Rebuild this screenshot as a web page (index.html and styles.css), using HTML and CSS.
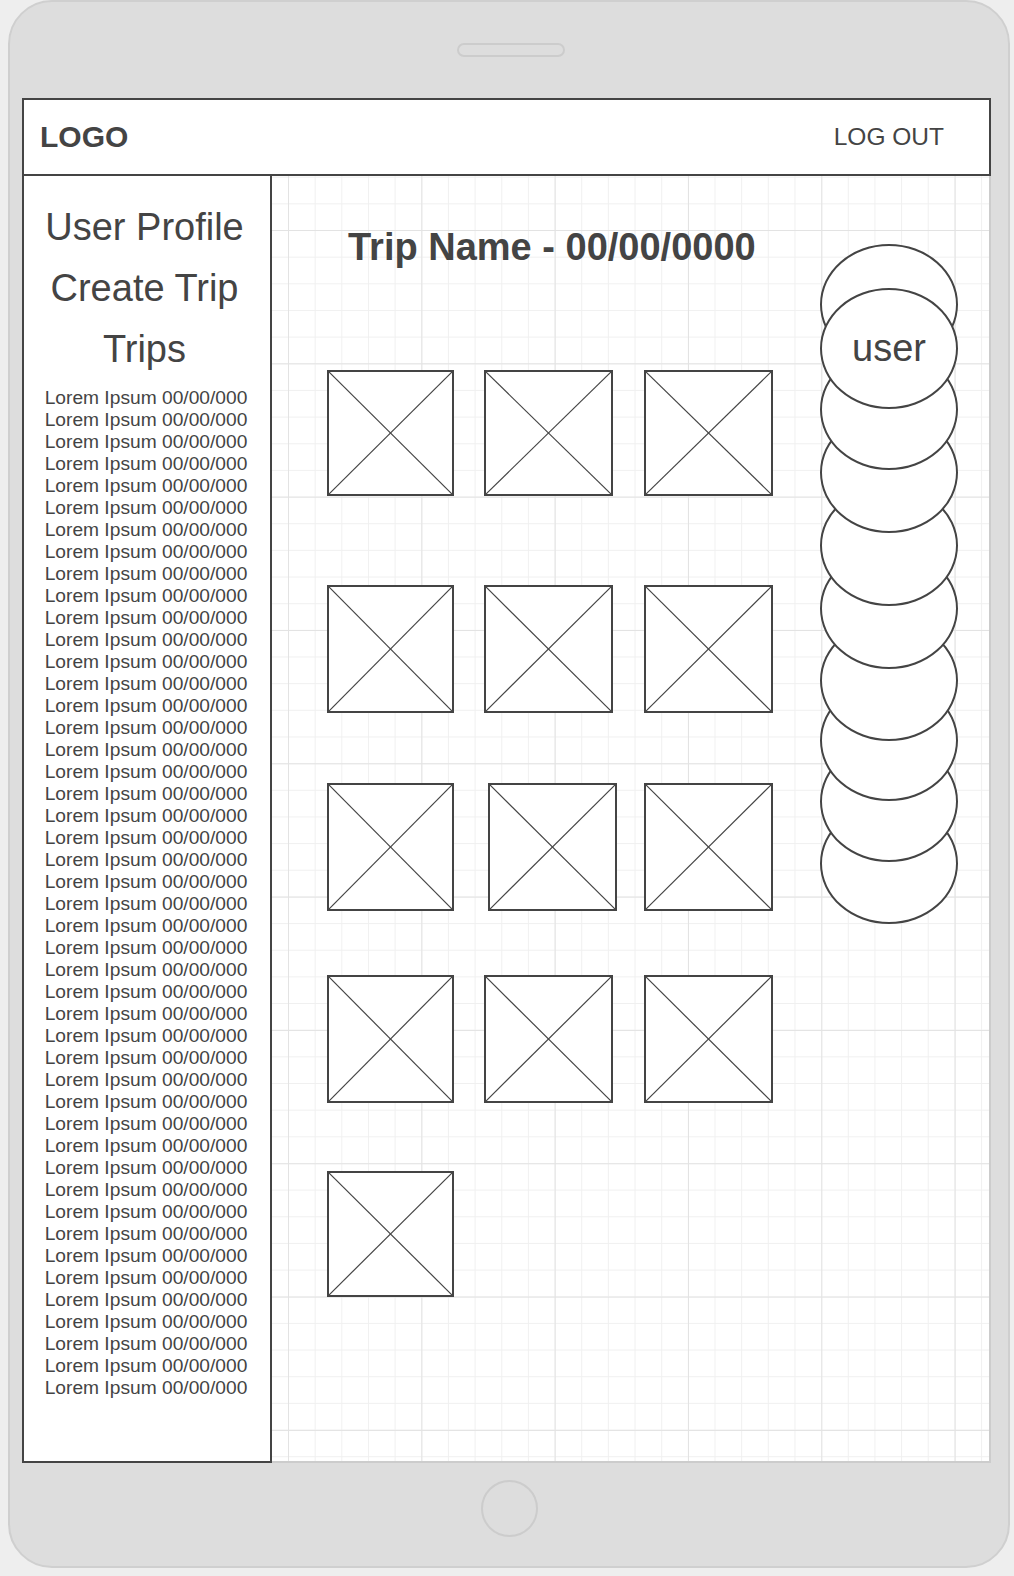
FILE: index.html
```html
<!DOCTYPE html>
<html lang="en">
<head>
<meta charset="utf-8">
<title>Trip</title>
<link rel="stylesheet" href="styles.css">
</head>
<body>
<div class="device">
  <div class="speaker"></div>
  <div class="screen">
    <header class="topbar">
      <div class="logo">LOGO</div>
      <div class="logout">LOG OUT</div>
    </header>
    <div class="panes">
      <aside class="sidebar">
        <nav class="nav">
          <div>User Profile</div>
          <div>Create Trip</div>
          <div>Trips</div>
        </nav>
        <ul class="trips">
          <li>Lorem Ipsum 00/00/000</li><li>Lorem Ipsum 00/00/000</li><li>Lorem Ipsum 00/00/000</li><li>Lorem Ipsum 00/00/000</li><li>Lorem Ipsum 00/00/000</li>
          <li>Lorem Ipsum 00/00/000</li><li>Lorem Ipsum 00/00/000</li><li>Lorem Ipsum 00/00/000</li><li>Lorem Ipsum 00/00/000</li><li>Lorem Ipsum 00/00/000</li>
          <li>Lorem Ipsum 00/00/000</li><li>Lorem Ipsum 00/00/000</li><li>Lorem Ipsum 00/00/000</li><li>Lorem Ipsum 00/00/000</li><li>Lorem Ipsum 00/00/000</li>
          <li>Lorem Ipsum 00/00/000</li><li>Lorem Ipsum 00/00/000</li><li>Lorem Ipsum 00/00/000</li><li>Lorem Ipsum 00/00/000</li><li>Lorem Ipsum 00/00/000</li>
          <li>Lorem Ipsum 00/00/000</li><li>Lorem Ipsum 00/00/000</li><li>Lorem Ipsum 00/00/000</li><li>Lorem Ipsum 00/00/000</li><li>Lorem Ipsum 00/00/000</li>
          <li>Lorem Ipsum 00/00/000</li><li>Lorem Ipsum 00/00/000</li><li>Lorem Ipsum 00/00/000</li><li>Lorem Ipsum 00/00/000</li><li>Lorem Ipsum 00/00/000</li>
          <li>Lorem Ipsum 00/00/000</li><li>Lorem Ipsum 00/00/000</li><li>Lorem Ipsum 00/00/000</li><li>Lorem Ipsum 00/00/000</li><li>Lorem Ipsum 00/00/000</li>
          <li>Lorem Ipsum 00/00/000</li><li>Lorem Ipsum 00/00/000</li><li>Lorem Ipsum 00/00/000</li><li>Lorem Ipsum 00/00/000</li><li>Lorem Ipsum 00/00/000</li>
          <li>Lorem Ipsum 00/00/000</li><li>Lorem Ipsum 00/00/000</li><li>Lorem Ipsum 00/00/000</li><li>Lorem Ipsum 00/00/000</li><li>Lorem Ipsum 00/00/000</li>
          <li>Lorem Ipsum 00/00/000</li>
        </ul>
      </aside>
      <main class="canvas">
        <section class="content">
          <h1 class="title">Trip Name - 00/00/0000</h1>
          <div class="row r1">
            <div class="ph"><svg viewBox="0 0 100 100" preserveAspectRatio="none"><line x1="0" y1="0" x2="100" y2="100"/><line x1="100" y1="0" x2="0" y2="100"/></svg></div>
            <div class="ph wide g30"><svg viewBox="0 0 100 100" preserveAspectRatio="none"><line x1="0" y1="0" x2="100" y2="100"/><line x1="100" y1="0" x2="0" y2="100"/></svg></div>
            <div class="ph wide g31"><svg viewBox="0 0 100 100" preserveAspectRatio="none"><line x1="0" y1="0" x2="100" y2="100"/><line x1="100" y1="0" x2="0" y2="100"/></svg></div>
          </div>
          <div class="row r2 tall">
            <div class="ph"><svg viewBox="0 0 100 100" preserveAspectRatio="none"><line x1="0" y1="0" x2="100" y2="100"/><line x1="100" y1="0" x2="0" y2="100"/></svg></div>
            <div class="ph wide g30"><svg viewBox="0 0 100 100" preserveAspectRatio="none"><line x1="0" y1="0" x2="100" y2="100"/><line x1="100" y1="0" x2="0" y2="100"/></svg></div>
            <div class="ph wide g31"><svg viewBox="0 0 100 100" preserveAspectRatio="none"><line x1="0" y1="0" x2="100" y2="100"/><line x1="100" y1="0" x2="0" y2="100"/></svg></div>
          </div>
          <div class="row r3 tall">
            <div class="ph"><svg viewBox="0 0 100 100" preserveAspectRatio="none"><line x1="0" y1="0" x2="100" y2="100"/><line x1="100" y1="0" x2="0" y2="100"/></svg></div>
            <div class="ph wide g34"><svg viewBox="0 0 100 100" preserveAspectRatio="none"><line x1="0" y1="0" x2="100" y2="100"/><line x1="100" y1="0" x2="0" y2="100"/></svg></div>
            <div class="ph wide g27"><svg viewBox="0 0 100 100" preserveAspectRatio="none"><line x1="0" y1="0" x2="100" y2="100"/><line x1="100" y1="0" x2="0" y2="100"/></svg></div>
          </div>
          <div class="row r4 tall">
            <div class="ph"><svg viewBox="0 0 100 100" preserveAspectRatio="none"><line x1="0" y1="0" x2="100" y2="100"/><line x1="100" y1="0" x2="0" y2="100"/></svg></div>
            <div class="ph wide g30"><svg viewBox="0 0 100 100" preserveAspectRatio="none"><line x1="0" y1="0" x2="100" y2="100"/><line x1="100" y1="0" x2="0" y2="100"/></svg></div>
            <div class="ph wide g31"><svg viewBox="0 0 100 100" preserveAspectRatio="none"><line x1="0" y1="0" x2="100" y2="100"/><line x1="100" y1="0" x2="0" y2="100"/></svg></div>
          </div>
          <div class="row r5">
            <div class="ph"><svg viewBox="0 0 100 100" preserveAspectRatio="none"><line x1="0" y1="0" x2="100" y2="100"/><line x1="100" y1="0" x2="0" y2="100"/></svg></div>
          </div>
        </section>
        <section class="stack">
          <div class="bubble c1"></div>
          <div class="bubble c2">user</div>
          <div class="bubble c3"></div>
          <div class="bubble c4"></div>
          <div class="bubble c5"></div>
          <div class="bubble c6"></div>
          <div class="bubble c7"></div>
          <div class="bubble c8"></div>
          <div class="bubble c9"></div>
          <div class="bubble c10"></div>
        </section>
      </main>
    </div>
  </div>
  <div class="home"></div>
</div>
</body>
</html>
```

FILE: styles.css
```css
* { box-sizing: border-box; }

html, body {
  margin: 0;
  padding: 0;
  background: #eeeeee;
  font-family: "Liberation Sans", Arial, sans-serif;
  color: #444444;
}

.device {
  margin-left: 8px;
  width: 1002px;
  height: 1568px;
  background: #dddddd;
  border: 2px solid #cfcfcf;
  border-radius: 44px;
  overflow: hidden;
}

.speaker {
  margin: 41px 0 0 447px;
  width: 108px;
  height: 14px;
  border: 2px solid #cccccc;
  border-radius: 7px;
}

.screen {
  margin: 41px 0 0 12px;
  width: 969px;
}

.topbar {
  height: 78px;
  border: 2px solid #444444;
  background: #ffffff;
  display: flex;
  align-items: center;
  justify-content: space-between;
  padding: 0 45px 0 16px;
}

.logo {
  font-size: 30px;
  font-weight: bold;
}

.logout {
  font-size: 24.5px;
}

.panes {
  display: flex;
  height: 1287px;
}

.sidebar {
  width: 250px;
  flex: none;
  background: #ffffff;
  border: 2px solid #444444;
  border-top: none;
  text-align: center;
  padding-top: 21px;
}

.nav {
  font-size: 38px;
  line-height: 61px;
  white-space: nowrap;
  padding-right: 5px;
}

.trips {
  list-style: none;
  margin: 7px 0 0;
  padding: 0 2px 0 0;
  font-size: 19.2px;
  line-height: 22px;
  white-space: nowrap;
}

.canvas {
  flex: 1;
  display: flex;
  background-color: #ffffff;
  border-right: 2px solid #cccccc;
  border-bottom: 2px solid #cccccc;
  background-image:
    linear-gradient(to right, #e3e3e3 1px, transparent 1px),
    linear-gradient(to bottom, #e3e3e3 1px, transparent 1px),
    linear-gradient(to right, #f0f0f0 1px, transparent 1px),
    linear-gradient(to bottom, #f0f0f0 1px, transparent 1px);
  background-size:
    133.333px 133.333px,
    133.333px 133.333px,
    26.667px 26.667px,
    26.667px 26.667px;
  background-position:
    16px 54px,
    16px 54px,
    16px 54px,
    16px 54px;
}

.content {
  width: 548px;
  flex: none;
  padding: 50px 0 0 55px;
}

.title {
  margin: 0 0 0 21px;
  font-size: 38px;
  line-height: 42px;
  font-weight: bold;
  white-space: nowrap;
}

.row {
  display: flex;
}

.r1 { margin-top: 102px; }
.r2 { margin-top: 89px; }
.r3 { margin-top: 70px; }
.r4 { margin-top: 64px; }
.r5 { margin-top: 68px; }

.ph {
  width: 127px;
  height: 126px;
  flex: none;
  border: 2px solid #444444;
  background: #ffffff;
}

.ph.wide { width: 129px; }
.tall .ph { height: 128px; }

.ph svg {
  display: block;
  width: 100%;
  height: 100%;
}

.ph line {
  stroke: #444444;
  stroke-width: 1.2px;
  vector-effect: non-scaling-stroke;
}

.g27 { margin-left: 27px; }
.g30 { margin-left: 30px; }
.g31 { margin-left: 31px; }
.g34 { margin-left: 34px; }

.stack {
  width: 138px;
  flex: none;
  padding-top: 68px;
  display: flex;
  flex-direction: column;
}

.bubble {
  position: relative;
  width: 138px;
  height: 121px;
  flex: none;
  border: 2px solid #444444;
  border-radius: 50%;
  background: #ffffff;
  display: flex;
  align-items: center;
  justify-content: center;
  font-size: 38px;
}

.c1 { z-index: 9; }
.c2 { z-index: 10; margin-top: -77px; }
.c3 { z-index: 8; margin-top: -60px; }
.c4 { z-index: 7; margin-top: -58px; }
.c5 { z-index: 6; margin-top: -48px; }
.c6 { z-index: 5; margin-top: -58px; }
.c7 { z-index: 4; margin-top: -49px; }
.c8 { z-index: 3; margin-top: -61px; }
.c9 { z-index: 2; margin-top: -60px; }
.c10 { z-index: 1; margin-top: -59px; }

.home {
  margin: 17px 0 0 471px;
  width: 57px;
  height: 57px;
  border: 2px solid #cccccc;
  border-radius: 50%;
}
```
